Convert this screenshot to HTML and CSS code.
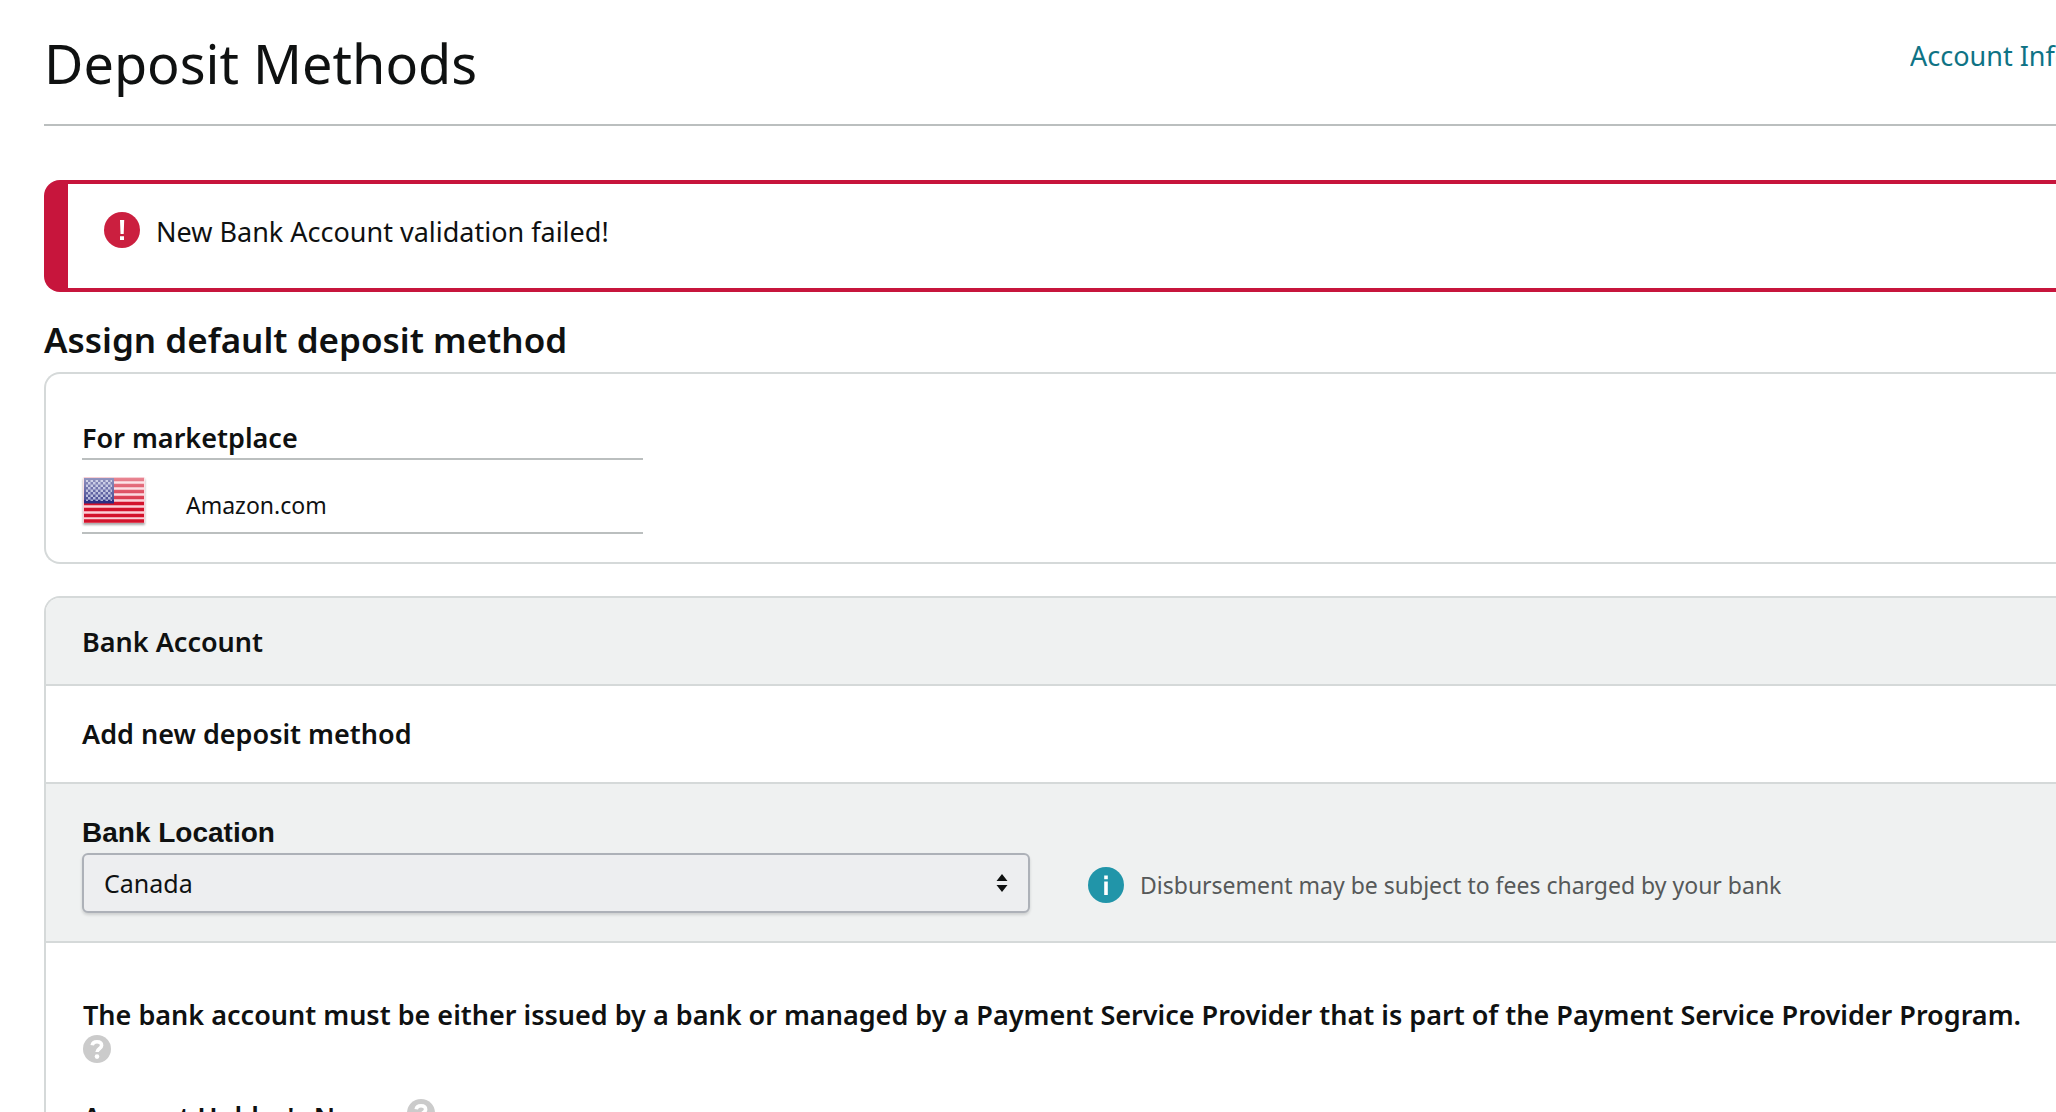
FILE: index.html
```html
<!DOCTYPE html>
<html lang="en">
<head>
  <meta charset="utf-8">
  <title>Deposit Methods</title>
  <link rel="stylesheet" href="styles.css">
</head>
<body>
  <svg class="sprite" aria-hidden="true">
    <symbol id="help" viewBox="0 0 28 28">
      <circle cx="14" cy="14" r="14" fill="#cbcbcb"/>
      <path d="M9.200 10.200C9.600 7.800 11.500 6.800 14 6.800c2.600 0 4.600 1.300 4.600 3.700 0 3.300-4.500 3.200-4.500 6.400" fill="none" stroke="#fff" stroke-width="3.600"/>
      <circle cx="14" cy="21.600" r="2.300" fill="#fff"/>
    </symbol>
  </svg>
  <main class="page">
    <header class="page-header">
      <h1 class="page-title">Deposit Methods</h1>
      <a class="page-link" href="#account">Account Info</a>
    </header>

    <div class="alert" role="alert">
      <svg class="icon" viewBox="0 0 36 36" aria-hidden="true">
        <circle cx="18" cy="18" r="18" fill="#cb1f3f"/>
        <path d="M16 8h4.200l-.5 14h-3.200zM16 24.200h4v3.800h-4z" fill="#fff"/>
      </svg>
      <p class="alert-text">New Bank Account validation failed!</p>
    </div>

    <h2 class="section-title">Assign default deposit method</h2>

    <section class="card card-closed marketplace">
      <table class="market-table">
        <thead>
          <tr><th colspan="2" scope="col">For marketplace</th></tr>
        </thead>
        <tbody>
          <tr>
            <td class="flag-cell">
              <svg class="flag" viewBox="0 0 62 46" role="img" aria-label="United States">
                <defs>
                  <linearGradient id="shine" x1="0" y1="0" x2="0" y2="1">
                    <stop offset="0" stop-color="#fff" stop-opacity=".5"/>
                    <stop offset=".5" stop-color="#fff" stop-opacity=".15"/>
                    <stop offset=".51" stop-color="#fff" stop-opacity="0"/>
                  </linearGradient>
                  <pattern id="stars" width="5" height="5" patternUnits="userSpaceOnUse">
                    <path d="M0 0h2.500v2.500H0zM2.500 2.500H5V5H2.500z" fill="#a9aed6"/>
                  </pattern>
                </defs>
                <rect width="62" height="46" rx="1" fill="#fbd0d7"/>
                <path d="M1 2.500h60M1 8.500h60M1 14.500h60M1 20.500h60M1 26.500h60M1 32.500h60M1 38.500h60M1 44h60" stroke="#d3132c" stroke-width="3.600"/>
                <rect x="1" y="1" width="30" height="25.500" fill="#2b2f83"/>
                <rect x="3" y="3" width="26" height="21" fill="url(#stars)"/>
                <rect width="62" height="46" fill="url(#shine)"/>
              </svg>
            </td>
            <td class="market-name">Amazon.com</td>
          </tr>
        </tbody>
      </table>
    </section>

    <section class="card">
      <h3 class="row row-header row-shaded">Bank Account</h3>
      <h3 class="row row-subheader">Add new deposit method</h3>
      <div class="row location row-shaded">
        <label class="location-label" for="bank-location">Bank Location</label>
        <div class="location-line">
          <div class="select-wrap">
            <select class="select" id="bank-location">
              <option>Canada</option>
            </select>
            <svg class="select-arrows" viewBox="0 0 12 18" aria-hidden="true">
              <path d="M6 0l5.500 7H.5zM6 18L.5 11h11z" fill="#0f1111"/>
            </svg>
          </div>
          <div class="hint">
            <svg class="icon" viewBox="0 0 36 36" aria-hidden="true">
              <circle cx="18" cy="18" r="18" fill="#2195a9"/>
              <path d="M16.200 8.500h3.600v3.700h-3.600zM16.200 14.500h3.600v13.500h-3.600z" fill="#fff"/>
            </svg>
            <p class="hint-text">Disbursement may be subject to fees charged by your bank</p>
          </div>
        </div>
      </div>
      <div class="details">
        <p class="bold-text">The bank account must be either issued by a bank or managed by a Payment Service Provider that is part of the Payment Service Provider Program.</p>
        <button class="help help-below" type="button" aria-label="Program help"><svg class="help-icon"><use href="#help"/></svg></button>
        <div class="field-title">
          <span class="bold-text">Account Holder's Name</span>
          <button class="help" type="button" aria-label="Name help"><svg class="help-icon"><use href="#help"/></svg></button>
        </div>
      </div>
    </section>
  </main>
</body>
</html>
```
FILE: styles.css
```css
* {
  box-sizing: border-box;
}

html {
  height: 100%;
  overflow: hidden;
}

body {
  height: 100%;
  margin: 0;
  overflow: hidden;
  background: #fff;
  color: #0f1111;
  font-family: "Noto Sans", "Open Sans", sans-serif;
  font-size: 27px;
  font-weight: 400;
  line-height: 36px;
}

h1, h2, h3, p {
  margin: 0;
}

.sprite {
  display: none;
}

.page {
  padding-left: 44px;
}

.page-header {
  display: flex;
  justify-content: space-between;
  align-items: flex-start;
  padding: 31px 0 29px;
  border-bottom: 2px solid #bbbfbf;
}

.page-title {
  font-size: 54px;
  font-weight: 400;
  line-height: 64px;
}

.page-link {
  width: 146px;
  padding-top: 7px;
  overflow: hidden;
  color: #0f7385;
  text-decoration: none;
  white-space: nowrap;
}

.alert {
  display: flex;
  align-items: flex-start;
  gap: 16px;
  margin-top: 54px;
  padding: 28px 0 40px 36px;
  border: 4px solid #c7153c;
  border-left-width: 24px;
  border-right: 0;
  border-radius: 16px 0 0 16px;
}

.icon {
  flex: none;
  width: 36px;
  height: 36px;
}

.alert-text {
  padding-top: 2px;
  margin-bottom: -2px;
}

.section-title {
  margin: 26px 0 10px;
  font-size: 35px;
  font-weight: 600;
  line-height: 44px;
}

.card {
  overflow: hidden;
  border: 2px solid #d5d9d9;
  border-right: 0;
  border-bottom: 0;
  border-radius: 16px 0 0;
}

.card-closed {
  border-bottom: 2px solid #d5d9d9;
  border-radius: 16px 0 0 16px;
}

.marketplace {
  margin-bottom: 32px;
  padding: 46px 36px 28px;
}

.market-table {
  width: 100%;
  max-width: 561px;
  border-spacing: 0;
}

.market-table th {
  padding: 0 0 2px;
  border-bottom: 2px solid #bbbfbf;
  font-weight: 600;
  text-align: left;
}

.market-table td {
  height: 74px;
  padding: 0;
  border-bottom: 2px solid #bbbfbf;
  vertical-align: top;
}

.market-table .flag-cell {
  width: 104px;
  padding: 17px 0 0 1px;
}

.flag {
  display: block;
  width: 62px;
  height: 46px;
  filter: drop-shadow(0 2px 1px #00000055);
}

.market-table .market-name {
  padding-top: 29px;
  font-size: 23px;
  line-height: 32px;
}

.row {
  border-bottom: 2px solid #d5d9d9;
  font-size: 27px;
  font-weight: 600;
}

.row-shaded {
  background: #eff1f1;
}

.row-header {
  padding: 26px 36px 24px;
}

.row-subheader {
  padding: 30px 36px;
}

.location {
  padding: 33px 36px 28px;
  font-weight: 400;
}

.location-label {
  display: block;
  margin-bottom: 4px;
  font-family: "Liberation Sans", sans-serif;
  font-size: 28px;
  font-weight: 700;
  line-height: 32px;
}

.location-line {
  display: flex;
  align-items: center;
  gap: 58px;
}

.select-wrap {
  position: relative;
  flex: 0 1 948px;
}

.select {
  display: block;
  width: 100%;
  height: 60px;
  padding: 0 44px 0 20px;
  appearance: none;
  border: 2px solid #adb1b8;
  border-radius: 6px;
  background: #edeef0;
  box-shadow: 0 2px 3px #0f111126;
  color: #0f1111;
  font-family: inherit;
  font-size: 25px;
  font-weight: inherit;
}

.select-arrows {
  position: absolute;
  top: 21px;
  right: 22px;
  width: 12px;
  height: 18px;
  pointer-events: none;
}

.hint {
  display: flex;
  align-items: center;
  gap: 16px;
  padding-top: 4px;
}

.hint-text {
  color: #565959;
  font-size: 23px;
  line-height: 32px;
}

.details {
  padding: 54px 20px 0 37px;
}

.bold-text {
  font-weight: 600;
}

.help {
  display: block;
  padding: 0;
  border: 0;
  background: none;
}

.help-below {
  margin: 2px 0 36px;
}

.help-icon {
  display: block;
  width: 28px;
  height: 28px;
}

.field-title {
  display: flex;
  align-items: flex-start;
  gap: 14px;
}
```
